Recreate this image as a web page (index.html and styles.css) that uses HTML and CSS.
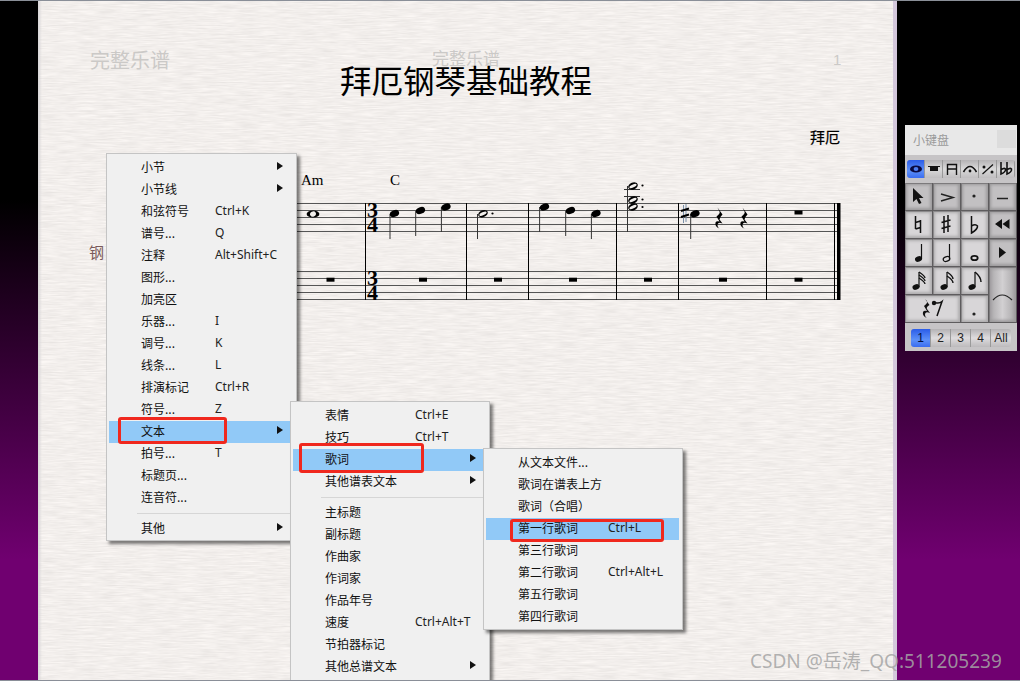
FILE: index.html
```html
<!DOCTYPE html>
<html lang="zh-CN">
<head>
    <meta charset="UTF-8">
    <meta name="viewport" content="width=device-width, initial-scale=1.0">
    <title>拜厄钢琴基础教程</title>
    <link rel="stylesheet" href="styles.css">
</head>
<body>
<div class="desktop">

    <!-- Score page with paper grain -->
    <div class="paper">
        <svg class="grain" width="855" height="680">
            <filter id="grainFilter" x="0" y="0" width="100%" height="100%" color-interpolation-filters="sRGB">
                <feTurbulence type="fractalNoise" baseFrequency="0.05 0.7" numOctaves="3" seed="4"/>
                <feColorMatrix values="0.1 0 0 0 0.9  0.1 0 0 0 0.885  0.1 0 0 0 0.875  0 0 0 0 1"/>
            </filter>
            <rect width="855" height="680" filter="url(#grainFilter)"/>
        </svg>
    </div>

    <svg class="score" width="1020" height="683" viewBox="0 0 1020 683">
        <defs>
            <g id="head"><ellipse rx="4.8" ry="3.3" transform="rotate(-22)"/></g>
            <g id="halfHead">
                <ellipse rx="5" ry="3.4" transform="rotate(-22)"/>
                <ellipse rx="3.9" ry="1.5" transform="rotate(-26)" fill="#f2efec"/>
            </g>
            <g id="rest"><rect x="-4" y="-2" width="8" height="4"/></g>
            <path id="quarterRest" d="M-2-11 L3-4 Q0-1 0 1 L3 5 Q-2 3-2 7 Q-2 9 0 10 Q-5 8-4 4 Q-3 2 0 3 L-3-2 Q1-5 0-7 Z"/>
        </defs>

        <text class="ghost ghost-left" x="90" y="68">完整乐谱</text>
        <text class="ghost ghost-mid" x="432" y="65">完整乐谱</text>
        <text class="ghost ghost-num" x="833" y="65">1</text>
        <text class="title" x="340" y="93">拜厄钢琴基础教程</text>
        <text class="composer" x="810" y="143">拜厄</text>
        <text class="staff-name" x="89" y="258">钢</text>
        <text class="chord" x="301" y="185">Am</text>
        <text class="chord" x="390" y="185">C</text>

        <!-- staff lines -->
        <g class="staff-line">
            <path d="M296 203.5H838M296 210.5H838M296 217.5H838M296 224.5H838M296 231.5H838"/>
            <path d="M296 271.5H838M296 278.5H838M296 285.5H838M296 292.5H838M296 299.5H838"/>
        </g>
        <g class="bar-line">
            <path d="M365.5 203V300M466.5 203V300M528.5 203V300M616.5 203V300M678.5 203V300M766.5 203V300M834.5 203V300"/>
        </g>
        <rect x="837" y="203" width="3.5" height="97"/>

        <!-- time signatures -->
        <text class="time-sig" x="367" y="217">3</text>
        <text class="time-sig" x="367" y="232">4</text>
        <text class="time-sig" x="367" y="285">3</text>
        <text class="time-sig" x="367" y="300">4</text>

        <!-- top staff notes -->
        <ellipse cx="313" cy="214" rx="6.4" ry="3.6"/>
        <ellipse cx="313" cy="214" rx="3" ry="2.6" transform="rotate(-30 313 214)" fill="#f2efec"/>

        <g class="stem"><path d="M390 214V239M415.7 211V236M441.4 207V232M477.5 214V239M539.6 207V232M565.7 211V236M591.4 214V239M627.5 186V232M690.7 214V239"/></g>
        <use href="#head" x="394.5" y="213.5"/>
        <use href="#head" x="420.5" y="210.5"/>
        <use href="#head" x="446" y="207"/>
        <use href="#halfHead" x="483" y="213.7"/>
        <circle cx="492.5" cy="213.5" r="1.1"/>
        <use href="#head" x="544.5" y="207"/>
        <use href="#head" x="570.5" y="210.5"/>
        <use href="#head" x="596" y="213.5"/>

        <!-- chord with ledger lines -->
        <g class="stem"><path d="M624 189.5H640M624 196.5H640"/></g>
        <use href="#halfHead" x="633" y="186"/>
        <use href="#halfHead" x="633" y="200"/>
        <use href="#halfHead" x="633" y="207"/>
        <circle cx="642.5" cy="185.5" r="1.1"/>
        <circle cx="642.5" cy="199.5" r="1.1"/>
        <circle cx="642.5" cy="207" r="1.1"/>

        <!-- sharp, note, rests -->
        <path class="sharp-v" d="M683.5 205V223M686 204V222"/>
        <path class="sharp-h" d="M681 211L689 208.5M681 217L689 214.5"/>
        <use href="#head" x="695" y="213.7"/>
        <use href="#quarterRest" x="719.5" y="218.5"/>
        <use href="#quarterRest" x="744.5" y="218.5"/>
        <use href="#rest" x="798.5" y="212.5"/>

        <!-- bottom staff rests -->
        <use href="#rest" x="330.5" y="279.7"/>
        <use href="#rest" x="423" y="279.7"/>
        <use href="#rest" x="498" y="279.7"/>
        <use href="#rest" x="573" y="279.7"/>
        <use href="#rest" x="648" y="279.7"/>
        <use href="#rest" x="723" y="279.7"/>
        <use href="#rest" x="798.5" y="279.7"/>
    </svg>

    <!-- Context menu, first level -->
    <div class="menu menu-main">
        <div class="item"><span class="label">小节</span><i class="arrow"></i></div>
        <div class="item"><span class="label">小节线</span><i class="arrow"></i></div>
        <div class="item"><span class="label">和弦符号</span><span class="key">Ctrl+K</span></div>
        <div class="item"><span class="label">谱号...</span><span class="key">Q</span></div>
        <div class="item"><span class="label">注释</span><span class="key">Alt+Shift+C</span></div>
        <div class="item"><span class="label">图形...</span></div>
        <div class="item"><span class="label">加亮区</span></div>
        <div class="item"><span class="label">乐器...</span><span class="key">I</span></div>
        <div class="item"><span class="label">调号...</span><span class="key">K</span></div>
        <div class="item"><span class="label">线条...</span><span class="key">L</span></div>
        <div class="item"><span class="label">排演标记</span><span class="key">Ctrl+R</span></div>
        <div class="item"><span class="label">符号...</span><span class="key">Z</span></div>
        <div class="item active"><span class="label">文本</span><i class="arrow"></i></div>
        <div class="item"><span class="label">拍号...</span><span class="key">T</span></div>
        <div class="item"><span class="label">标题页...</span></div>
        <div class="item"><span class="label">连音符...</span></div>
        <div class="sep"></div>
        <div class="item"><span class="label">其他</span><i class="arrow"></i></div>
    </div>

    <!-- Text submenu -->
    <div class="menu menu-text">
        <div class="item"><span class="label">表情</span><span class="key">Ctrl+E</span></div>
        <div class="item"><span class="label">技巧</span><span class="key">Ctrl+T</span></div>
        <div class="item active"><span class="label">歌词</span><i class="arrow"></i></div>
        <div class="item"><span class="label">其他谱表文本</span><i class="arrow"></i></div>
        <div class="sep"></div>
        <div class="item"><span class="label">主标题</span></div>
        <div class="item"><span class="label">副标题</span></div>
        <div class="item"><span class="label">作曲家</span></div>
        <div class="item"><span class="label">作词家</span></div>
        <div class="item"><span class="label">作品年号</span></div>
        <div class="item"><span class="label">速度</span><span class="key">Ctrl+Alt+T</span></div>
        <div class="item"><span class="label">节拍器标记</span></div>
        <div class="item"><span class="label">其他总谱文本</span><i class="arrow"></i></div>
        <div class="sep"></div>
    </div>

    <!-- Lyrics submenu -->
    <div class="menu menu-lyrics">
        <div class="item"><span class="label">从文本文件...</span></div>
        <div class="item"><span class="label">歌词在谱表上方</span></div>
        <div class="item"><span class="label">歌词（合唱）</span></div>
        <div class="item active"><span class="label">第一行歌词</span><span class="key">Ctrl+L</span></div>
        <div class="item"><span class="label">第三行歌词</span></div>
        <div class="item"><span class="label">第二行歌词</span><span class="key">Ctrl+Alt+L</span></div>
        <div class="item"><span class="label">第五行歌词</span></div>
        <div class="item"><span class="label">第四行歌词</span></div>
    </div>

    <!-- Red annotation boxes -->
    <div class="mark mark-text"></div>
    <div class="mark mark-lyrics"></div>
    <div class="mark mark-first"></div>

    <!-- Keypad window -->
    <div class="keypad">
        <div class="keypad-title">
            <span>小键盘</span>
            <div class="keypad-close"></div>
        </div>
        <div class="keypad-tabs">
            <div class="tab on"><svg width="18" height="18"><ellipse cx="9" cy="9" rx="6" ry="3.6" fill="#0a0a40"/><ellipse cx="9" cy="9" rx="2.4" ry="2" fill="#4d7df0"/></svg></div>
            <div class="tab"><svg width="18" height="18"><path d="M3 6.5H15" stroke="#111"/><rect x="5" y="7" width="8" height="4" fill="#111"/></svg></div>
            <div class="tab"><svg width="18" height="18"><path d="M4.5 15V4.5H13.5V15M4.5 9H13.5" fill="none" stroke="#111" stroke-width="1.4"/></svg></div>
            <div class="tab"><svg width="18" height="18"><path d="M2.5 12Q9 1 15.5 12" fill="none" stroke="#111" stroke-width="1.6"/><circle cx="9" cy="11" r="1.4" fill="#111"/></svg></div>
            <div class="tab"><svg width="18" height="18"><path d="M3.5 14L14 4.5" stroke="#111" stroke-width="1.2"/><circle cx="5" cy="7" r="1.5" fill="#111"/><circle cx="13" cy="12" r="1.5" fill="#111"/></svg></div>
            <div class="tab"><svg width="18" height="18"><path d="M4 2V14Q9 12 8.5 9Q7 7.5 4 10M10 2V14Q15 12 14.5 9Q13 7.5 10 10" fill="none" stroke="#111" stroke-width="1.6"/></svg></div>
        </div>
        <div class="keypad-grid">
            <div class="btn"><svg width="26" height="26"><path d="M8 5L8 19L11.5 16L14 21L16.5 20L14 15L18.5 15Z" fill="#111"/></svg></div>
            <div class="btn"><svg width="26" height="26"><path d="M8 11L20 14.5L8 18" fill="none" stroke="#222" stroke-width="1.5"/></svg></div>
            <div class="btn"><svg width="26" height="26"><circle cx="13" cy="13" r="1.6" fill="#222"/></svg></div>
            <div class="btn"><svg width="26" height="26"><path d="M8 15.5H19" stroke="#222" stroke-width="1.5"/></svg></div>

            <div class="btn light"><svg width="26" height="26"><path d="M10.5 5V18M15.5 9V22M10.5 11.5L15.5 10M10.5 18L15.5 16.5" fill="none" stroke="#111" stroke-width="1.5"/></svg></div>
            <div class="btn light"><svg width="26" height="26"><path d="M11 5V22M15 4V21M8.5 11.5L17.5 9M8.5 17.5L17.5 15" fill="none" stroke="#111" stroke-width="1.5"/></svg></div>
            <div class="btn light"><svg width="26" height="26"><path d="M10.5 5V22Q17 18 16.5 15Q14.5 12.5 10.5 15" fill="none" stroke="#111" stroke-width="1.5"/></svg></div>
            <div class="btn"><svg width="26" height="26"><path d="M13 8L6 13L13 18ZM20.5 8L13.5 13L20.5 18Z" fill="#111"/></svg></div>

            <div class="btn light"><svg width="26" height="26"><path d="M16.5 5V20" stroke="#111" stroke-width="1.2"/><ellipse cx="13.5" cy="20" rx="3.6" ry="2.7" transform="rotate(-20 13.5 20)" fill="#111"/></svg></div>
            <div class="btn light"><svg width="26" height="26"><path d="M16.5 5V20" stroke="#111" stroke-width="1.2"/><ellipse cx="13.5" cy="20" rx="3.4" ry="2.3" transform="rotate(-20 13.5 20)" fill="none" stroke="#111" stroke-width="1.2"/></svg></div>
            <div class="btn light"><svg width="26" height="26"><ellipse cx="13.5" cy="19" rx="3.2" ry="2.2" fill="none" stroke="#111" stroke-width="1.8"/></svg></div>
            <div class="btn"><svg width="26" height="26"><path d="M10 8L17 13.5L10 19Z" fill="#111"/></svg></div>

            <div class="btn light"><svg width="26" height="26"><path d="M14 5V20" stroke="#111" stroke-width="1.2"/><path d="M14 5Q20 9 20 11M14 8Q20 12 20 14M14 11Q20 15 20 17" fill="none" stroke="#111" stroke-width="1.3"/><ellipse cx="11" cy="20" rx="3.6" ry="2.7" transform="rotate(-20 11 20)" fill="#111"/></svg></div>
            <div class="btn light"><svg width="26" height="26"><path d="M14 5V20" stroke="#111" stroke-width="1.2"/><path d="M14 5Q20 9 20 12M14 9Q20 13 20 16" fill="none" stroke="#111" stroke-width="1.4"/><ellipse cx="11" cy="20" rx="3.6" ry="2.7" transform="rotate(-20 11 20)" fill="#111"/></svg></div>
            <div class="btn light"><svg width="26" height="26"><path d="M14 5V20" stroke="#111" stroke-width="1.2"/><path d="M14 5Q20 10 20 15" fill="none" stroke="#111" stroke-width="1.5"/><ellipse cx="11" cy="20" rx="3.6" ry="2.7" transform="rotate(-20 11 20)" fill="#111"/></svg></div>
            <div class="btn slur"><svg width="26" height="54"><path d="M4 33Q13 23 23 33" fill="none" stroke="#222" stroke-width="1.2"/></svg></div>

            <div class="btn wide light"><svg width="54" height="26"><path d="M20 4L24.5 10Q21 12 22 14L25 18Q20 16 20 20Q20 22 22 23Q17 21 18 17Q19 15 22 16L19 11Q23 8 22 6Z" fill="#111"/><circle cx="29" cy="8" r="2.2" fill="#111"/><path d="M30 7.5Q34 9 37 6.5L32 21" fill="none" stroke="#111" stroke-width="1.5"/></svg></div>
            <div class="btn light"><svg width="26" height="26"><circle cx="13" cy="19" r="1.6" fill="#222"/></svg></div>
        </div>
        <div class="keypad-pages">
            <div class="page on">1</div>
            <div class="page">2</div>
            <div class="page">3</div>
            <div class="page">4</div>
            <div class="page">All</div>
        </div>
    </div>

    <div class="watermark">CSDN @岳涛_QQ:511205239</div>
</div>
</body>
</html>
```

FILE: styles.css
```css
/* Basis */
html, body {
    margin: 0;
    padding: 0;
    background: #fff;
}

.desktop {
    position: relative;
    width: 1020px;
    height: 683px;
    overflow: hidden;
    font-family: "Noto Sans CJK SC", "Noto Sans", sans-serif;
    background: linear-gradient(#000 200px, #700070 560px);
}

/* Top and bottom edges of the window */
.desktop::before {
    content: "";
    position: absolute;
    left: 0;
    right: 0;
    top: 0;
    height: 1px;
    z-index: 1;
    background: #8a8f98;
}

.desktop::after {
    content: "";
    position: absolute;
    left: 0;
    right: 0;
    top: 680px;
    height: 3px;
    background: #fff;
    border-top: 1px solid #8a8f98;
    box-sizing: border-box;
}

.paper {
    position: absolute;
    left: 38px;
    top: 1px;
    width: 855px;
    height: 680px;
    border-right: 4px solid #d4c8dc;
}

/* Soft left edge of the page */
.paper::before {
    content: "";
    position: absolute;
    left: 0;
    top: 0;
    bottom: 0;
    width: 4px;
    background: linear-gradient(90deg, #d8d6d8, rgba(216, 214, 216, 0));
}

.grain {
    display: block;
}

/* Score */
.score {
    position: absolute;
    left: 0;
    top: 0;
}

.ghost {
    fill: #cbc9c7;
}

.ghost-left {
    font-size: 20px;
}

.ghost-mid {
    font-size: 17px;
}

.ghost-num {
    font-size: 15px;
    font-family: "Liberation Sans", sans-serif;
}

.title {
    font-size: 31.5px;
    fill: #000;
}

.composer {
    font-size: 15px;
    fill: #000;
    stroke: #000;
    stroke-width: 0.2;
}

.staff-name {
    font-size: 15px;
    fill: #7a5a5a;
}

.chord {
    font-family: "Liberation Serif", serif;
    font-size: 15px;
    fill: #000;
}

.time-sig {
    font-family: "Liberation Serif", serif;
    font-size: 22px;
    font-weight: bold;
    fill: #000;
}

.staff-line path {
    stroke: #555;
    stroke-width: 1;
    fill: none;
}

.bar-line path {
    stroke: #000;
    stroke-width: 1;
    fill: none;
}

.stem path {
    stroke: #333;
    stroke-width: 1;
    fill: none;
}

.sharp-v {
    stroke: #7a8fa8;
    stroke-width: 1;
    fill: none;
}

.sharp-h {
    stroke: #000;
    stroke-width: 2;
    fill: none;
}

/* Menus */
.menu {
    position: absolute;
    box-sizing: border-box;
    padding: 3px 3px 3px 2px;
    background: #f0f0f0;
    border: 1px solid #c4c4c4;
    box-shadow: 3px 3px 3px rgba(0, 0, 0, 0.5);
    font-size: 12px;
    color: #111;
}

.menu-main {
    left: 106px;
    top: 153px;
    width: 191px;
    height: 388px;
    --label: 74px;
}

.menu-text {
    left: 290px;
    top: 401px;
    width: 200px;
    height: 290px;
    --label: 90px;
}

.menu-lyrics {
    left: 483px;
    top: 448px;
    width: 200px;
    height: 182px;
    --label: 90px;
}

.item {
    box-sizing: border-box;
    display: flex;
    align-items: center;
    height: 22px;
    padding: 0 10px 4px 32px;
    white-space: nowrap;
}

.item.active {
    background: #91c9f7;
}

.label {
    width: var(--label);
    flex: none;
}

.key {
    font-family: "Noto Sans", sans-serif;
    color: #222;
}

.arrow {
    margin-left: auto;
    width: 0;
    height: 0;
    border-left: 6px solid #111;
    border-top: 4px solid transparent;
    border-bottom: 4px solid transparent;
}

.sep {
    height: 1px;
    margin: 4px 0 4px 28px;
    background: #d6d6d6;
}

/* Red boxes drawn over the screenshot */
.mark {
    position: absolute;
    box-sizing: border-box;
    border: 3px solid #f0281e;
    border-radius: 3px;
}

.mark-text {
    left: 118px;
    top: 417px;
    width: 109px;
    height: 27px;
}

.mark-lyrics {
    left: 299px;
    top: 443px;
    width: 125px;
    height: 30px;
}

.mark-first {
    left: 510px;
    top: 519px;
    width: 154px;
    height: 23px;
}

/* Keypad */
.keypad {
    position: absolute;
    left: 905px;
    top: 125px;
    width: 112px;
    height: 226px;
    background: #c6c4c6;
}

.keypad-title {
    box-sizing: border-box;
    display: flex;
    align-items: center;
    justify-content: space-between;
    height: 30px;
    padding: 0 1px 2px 8px;
    background: #e8e8e8;
    font-size: 12px;
    color: #9a9a9a;
}

.keypad-close {
    width: 19px;
    height: 18px;
    background: #dcdcdc;
}

.keypad-tabs {
    display: flex;
    height: 18px;
    margin: 5px 2px;
    border-radius: 3px;
    overflow: hidden;
    background: linear-gradient(#b4b2b4, #dadada 50%, #c0bec0);
}

.tab {
    width: 18px;
    height: 18px;
    box-shadow: inset -1px 0 0 #999;
}

.tab svg,
.btn svg {
    display: block;
}

.tab.on {
    background: linear-gradient(#2b5ce8, #5c90f8 60%, #3a6cf0);
}

.keypad-grid {
    display: grid;
    grid-template-columns: repeat(4, 28px);
    grid-template-rows: repeat(5, 28px);
    height: 140px;
}

.btn {
    box-sizing: border-box;
    border-right: 1px solid #5e5c5e;
    border-bottom: 1px solid #5e5c5e;
    background: #c2c0c2;
    box-shadow: inset 1px 1px 0 #7c7a7c, inset 0 0 3px 2px #9c9a9c;
}

.btn.light {
    background: #d8d6d8;
    box-shadow: inset 1px 1px 0 #8c8a8c, inset 0 0 3px 2px #aeacae;
}

.btn.wide {
    grid-column: span 2;
}

.btn.slur {
    grid-row: span 2;
    background: linear-gradient(90deg, #a8a6a8, #d2d0d2 50%, #a8a6a8);
}

.keypad-pages {
    display: flex;
    height: 18px;
    margin: 6px 6px 0;
    border-radius: 3px;
    overflow: hidden;
    background: linear-gradient(#b4b2b4, #dedcde 50%, #bcbabc);
}

.page {
    width: 20px;
    height: 18px;
    box-sizing: border-box;
    border-right: 1px solid #999;
    text-align: center;
    font-family: "Liberation Sans", sans-serif;
    font-size: 12px;
    line-height: 18px;
    color: #222;
}

.page.on {
    background: linear-gradient(#2b5ce8, #5c90f8 60%, #3a6cf0);
    color: #001040;
}

.page:last-child {
    border-right: none;
}

.watermark {
    position: absolute;
    left: 750px;
    top: 648px;
    font-family: "Noto Sans", "Noto Sans CJK SC", sans-serif;
    font-size: 19px;
    line-height: 26px;
    white-space: nowrap;
    color: rgba(165, 165, 165, 0.85);
}
```
